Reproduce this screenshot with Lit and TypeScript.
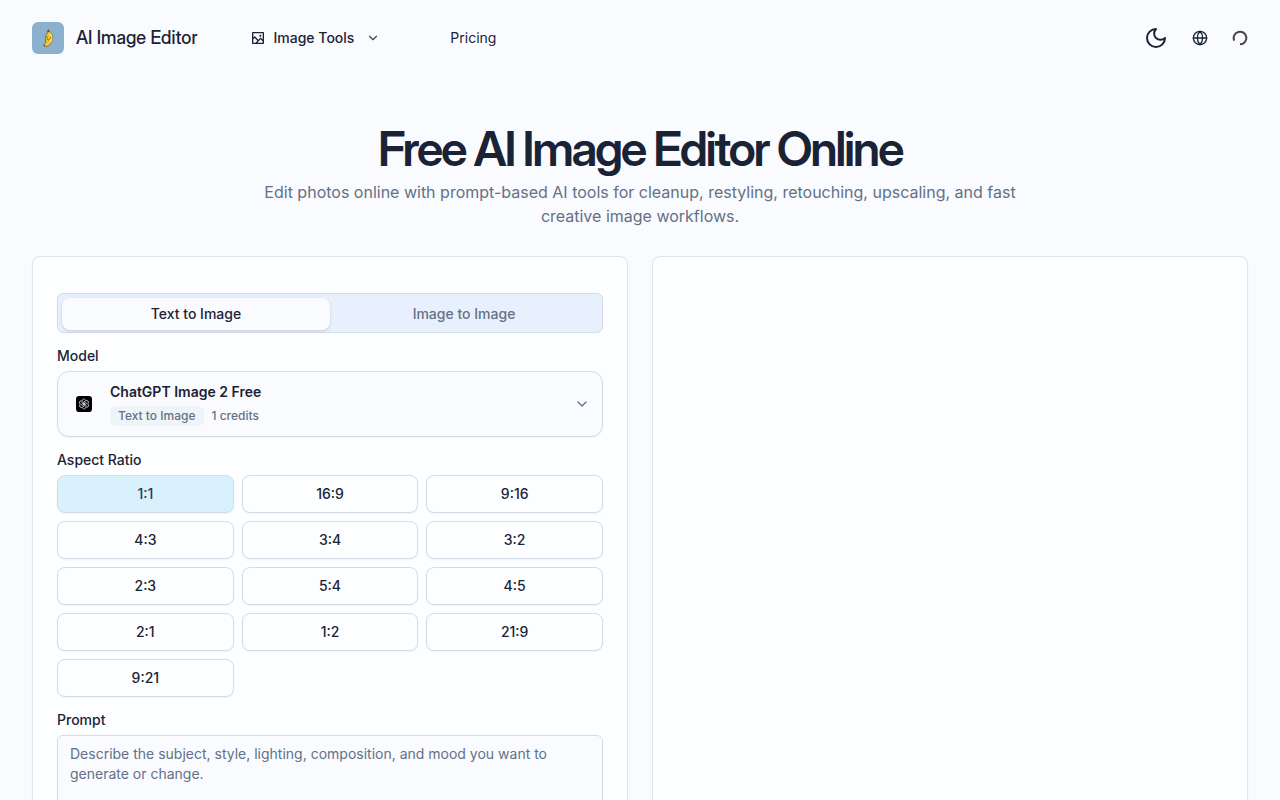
import { LitElement, html, css, svg } from "lit";
import { customElement, state } from "lit/decorators.js";
import { classMap } from "lit/directives/class-map.js";

const ratios = ["1:1", "16:9", "9:16", "4:3", "3:4", "3:2", "2:3", "5:4", "4:5", "2:1", "1:2", "21:9", "9:21"];
const modes = ["Text to Image", "Image to Image"];

const chevron = html`<svg class="chevron" viewBox="0 0 24 24" aria-hidden="true"><path d="m6 9 6 6 6-6" /></svg>`;

const petal = "M12 12.6 8.3 10.5V6.4a3.6 3.6 0 0 1 6.6-2";

@customElement("app-root")
export class AppRoot extends LitElement {
  @state() private mode = modes[0];
  @state() private ratio = ratios[0];

  static styles = css`
    :host {
      display: block;
      height: 100vh;
      overflow: hidden;
      background: #fafbff;
      color: #1a2335;
      font: 14px/20px Inter, "Liberation Sans", sans-serif;
    }
    * { box-sizing: border-box; }
    button, textarea { font: inherit; color: inherit; margin: 0; }
    button { cursor: pointer; padding: 0; border: 0; background: none; }
    a { color: inherit; text-decoration: none; }
    svg { display: block; flex: none; }
    .line, .chevron {
      fill: none;
      stroke: currentColor;
      stroke-width: 2;
      stroke-linecap: round;
      stroke-linejoin: round;
    }
    .chevron { width: 14px; height: 14px; }
    header {
      display: flex;
      align-items: center;
      justify-content: space-between;
      height: 76px;
      padding: 0 32px;
    }
    .left, .actions, nav, .brand, .tools { display: flex; align-items: center; }
    .left { gap: 52px; }
    .brand { gap: 12px; font-size: 18px; line-height: 28px; font-weight: 500; }
    .brand, h1 { font-family: "Inter Display", Inter, sans-serif; }
    .logo { width: 32px; height: 32px; border-radius: 6px; background: #8cb1cf; }
    nav { gap: 70px; }
    .tools { gap: 8px; font-weight: 500; }
    .tools .chevron { margin-left: 4px; opacity: 0.85; }
    .picture { width: 16px; height: 16px; fill: currentColor; }
    .actions { gap: 24px; }
    .moon { width: 24px; height: 24px; }
    .small { width: 16px; height: 16px; }
    .spinner { color: #444; stroke-width: 3; stroke-linecap: butt; }
    .hero {
      display: flex;
      flex-direction: column;
      align-items: center;
      gap: 6px;
      padding: 48px 32px 28px;
      text-align: center;
    }
    h1 { margin: 0; font-size: 48px; line-height: 50px; font-weight: 600; letter-spacing: -0.05em; }
    .hero p { margin: 0; max-width: 768px; font-size: 16px; line-height: 24px; color: #637086; }
    main { display: grid; grid-template-columns: 1fr 1fr; gap: 24px; padding: 0 32px 32px; }
    .panel {
      border: 1px solid #e1e4eb;
      border-radius: 8px;
      background: #fdfeff;
      box-shadow: 0 1px 2px rgb(0 0 0 / 5%);
      padding: 36px 24px 24px;
    }
    .tabs {
      display: grid;
      grid-template-columns: 1fr 1fr;
      height: 40px;
      padding: 4px 4px 2px;
      border: 1px solid #d5dbe6;
      border-radius: 6px;
      background: #e8f0fe;
    }
    .tab { border-radius: 8px; font-weight: 500; color: #657085; }
    .tab.on { background: #fafbff; color: #1a2335; box-shadow: 0 1px 3px rgb(0 0 0 / 16%); }
    .label { display: block; margin: 13px 0 5px; font-weight: 500; }
    .model {
      display: flex;
      align-items: center;
      gap: 12px;
      width: 100%;
      height: 66px;
      padding: 0 12px;
      border: 1px solid #d5dbe6;
      border-radius: 12px;
      background: #fafbff;
      box-shadow: 0 1px 2px rgb(0 0 0 / 5%);
      text-align: left;
    }
    .mark { display: grid; place-items: center; width: 28px; height: 28px; border-radius: 8px; background: #fafcff; }
    .info { display: flex; flex-direction: column; flex: 1; gap: 4px; }
    .name { font-weight: 600; }
    .meta { display: flex; align-items: center; gap: 8px; font-size: 12px; font-weight: 500; color: #657085; }
    .tag { padding: 0 8px; border-radius: 6px; background: #eff4f9; }
    .model .chevron { width: 16px; height: 16px; color: #657085; }
    .ratios { display: grid; grid-template-columns: repeat(3, 1fr); gap: 8px; }
    .ratio {
      height: 38px;
      border: 1px solid #d5dbe6;
      border-radius: 8px;
      background: #fdfeff;
      box-shadow: 0 1px 2px rgb(0 0 0 / 5%);
      font-weight: 500;
    }
    .ratio.on { background: #d9f0fd; color: #2b3a4d; }
    textarea {
      display: block;
      width: 100%;
      height: 128px;
      padding: 8px 12px;
      border: 1px solid #d5dbe6;
      border-radius: 6px;
      background: #fafbff;
      resize: none;
    }
    textarea::placeholder { color: #637086; opacity: 1; }
  `;

  render() {
    return html`
      <header>
        <div class="left">
          <a class="brand" href="#">
            <svg class="logo" viewBox="0 0 32 32" aria-hidden="true">
              <path d="M15.5 8.5 16.6 7.8 17.3 10C20.6 12 21.4 15.5 20 19.3 18.7 23.2 15 25.6 11.9 23.9 11.2 23.2 11.7 22.5 13 21.7 14.2 20.6 13.6 18 13.6 15 13.8 12.5 16 11.8 15.5 8.5Z" fill="#f2c632" stroke="#65512c" stroke-width=".7" />
              <path d="M17.6 11.2C20 13.4 20.6 16.7 18.5 20.4" fill="none" stroke="#ffe669" stroke-width="1.4" />
              <path d="M15.5 8.2 16.8 7.7 17.3 9.8 16 10Z" fill="#5b4a32" />
              <path d="M14.4 15.2h1.5M18 15.8h1.4M15.2 17.2q1.3 1.2 2.4.1M11.8 23.2l1.5.9" fill="none" stroke="#65431d" stroke-width=".9" />
            </svg>
            <span>AI Image Editor</span>
          </a>
          <nav>
            <button class="tools">
              <svg class="picture" viewBox="0 0 24 24" aria-hidden="true">
                <path d="M5 11.1L7 9.1L12.5 14.6L16 11.1L19 14.1V5H5V11.1ZM5 13.93V19H8.1L11.09 16.01L7 11.93L5 13.93ZM10.93 19H19V16.93L16 13.93L10.93 19ZM4 3H20C20.55 3 21 3.45 21 4V20C21 20.55 20.55 21 20 21H4C3.45 21 3 20.55 3 20V4C3 3.45 3.45 3 4 3ZM15.5 10C14.67 10 14 9.33 14 8.5C14 7.67 14.67 7 15.5 7C16.33 7 17 7.67 17 8.5C17 9.33 16.33 10 15.5 10Z" />
              </svg>
              Image Tools ${chevron}
            </button>
            <a href="#pricing">Pricing</a>
          </nav>
        </div>
        <div class="actions">
          <button aria-label="Toggle theme">
            <svg class="line moon" viewBox="0 0 24 24"><path d="M12 3a6 6 0 0 0 9 9 9 9 0 1 1-9-9Z" /></svg>
          </button>
          <button aria-label="Language">
            <svg class="line small" viewBox="0 0 24 24"><circle cx="12" cy="12" r="10" /><path d="M12 2a14.5 14.5 0 0 0 0 20 14.5 14.5 0 0 0 0-20M2 12h20" /></svg>
          </button>
          <svg class="line small spinner" viewBox="0 0 24 24" role="img" aria-label="Loading"><path d="M3.4 16A9.5 9.5 0 1 1 12 21.5" /></svg>
        </div>
      </header>
      <section class="hero">
        <h1>Free AI Image Editor Online</h1>
        <p>Edit photos online with prompt-based AI tools for cleanup, restyling, retouching, upscaling, and fast creative image workflows.</p>
      </section>
      <main>
        <section class="panel">
          <div class="tabs" role="tablist">
            ${modes.map((m) => html`<button role="tab" aria-selected=${m === this.mode} class=${classMap({ tab: true, on: m === this.mode })} @click=${() => (this.mode = m)}>${m}</button>`)}
          </div>
          <label class="label" for="model">Model</label>
          <button class="model" id="model">
            <span class="mark">
              <svg class="small" viewBox="0 0 24 24" aria-hidden="true">
                <rect width="24" height="24" rx="5" />
                <g fill="none" stroke="#fff" stroke-width="1.3" transform="translate(2.4 2.4) scale(.8)">
                  ${[0, 60, 120, 180, 240, 300].map((a) => svg`<path d=${petal} transform="rotate(${a} 12 12)" />`)}
                </g>
              </svg>
            </span>
            <span class="info">
              <span class="name">ChatGPT Image 2 Free</span>
              <span class="meta"><span class="tag">Text to Image</span><span>1 credits</span></span>
            </span>
            ${chevron}
          </button>
          <span class="label" id="ratio-label">Aspect Ratio</span>
          <div class="ratios" role="group" aria-labelledby="ratio-label">
            ${ratios.map((r) => html`<button aria-pressed=${r === this.ratio} class=${classMap({ ratio: true, on: r === this.ratio })} @click=${() => (this.ratio = r)}>${r}</button>`)}
          </div>
          <label class="label" for="prompt">Prompt</label>
          <textarea id="prompt" placeholder="Describe the subject, style, lighting, composition, and mood you want to generate or change."></textarea>
        </section>
        <section class="panel" aria-label="Result"></section>
      </main>
    `;
  }
}
